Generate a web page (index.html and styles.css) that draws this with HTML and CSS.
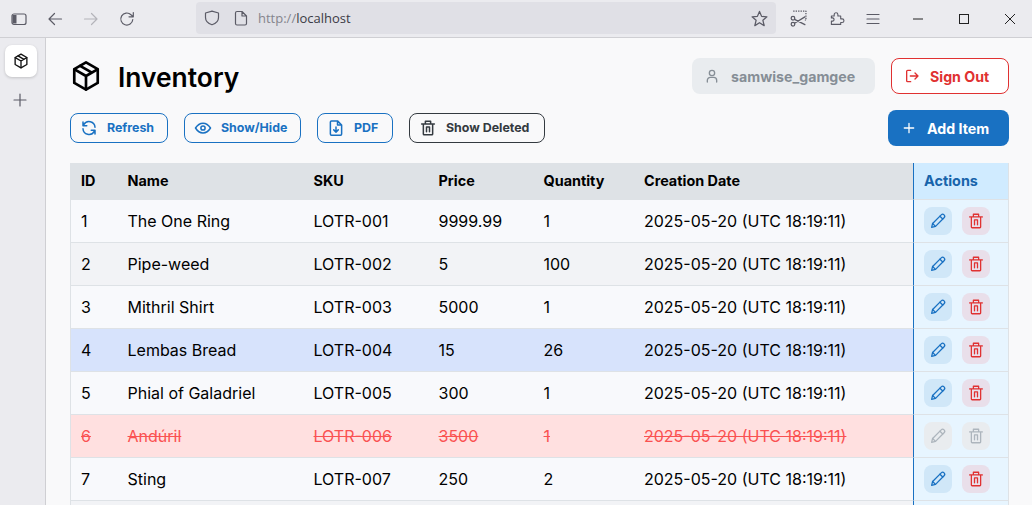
FILE: index.html
```html
<!DOCTYPE html>
<html lang="en">
<head>
<meta charset="utf-8">
<title>Inventory</title>
<link rel="stylesheet" href="styles.css">
</head>
<body>
<svg class="defs" width="0" height="0" aria-hidden="true">
  <defs>
    <symbol id="pkg" viewBox="0 0 24 24"><path d="M12 1.800 20.800 6.800v10.400L12 22.200 3.200 17.200V6.800Z"/><path d="M3.400 7 12 12l8.600-5M12 12v10M7.600 4.400l8.800 5.100"/></symbol>
    <symbol id="trash" viewBox="0 0 24 24"><path d="M3.500 6.500h17M8.500 6.500V3h7v3.500M5.800 6.500V20a1 1 0 0 0 1 1h10.400a1 1 0 0 0 1-1V6.500M10 17v-6.500h4V17"/></symbol>
    <symbol id="pencil" viewBox="0 0 24 24"><path d="M3.500 20.500 4.800 15.300 16.300 3.800a2.400 2.400 0 0 1 3.800 3.800L8.700 19.200Z"/><path d="M14.600 5.600 18.300 9.300M4.800 15.300l3.900 3.900"/></symbol>
  </defs>
</svg>
<header class="toolbar">
  <svg class="tb-icon sidebar-toggle" viewBox="0 0 16 16"><rect x="1" y="3" width="14" height="10.500" rx="2"/><path class="solid" d="M1.500 4h4v8.500h-4z"/></svg>
  <svg class="tb-icon back" viewBox="0 0 16 16"><path d="M14.500 8H2M7.500 2.500 2 8l5.500 5.500"/></svg>
  <svg class="tb-icon forward" viewBox="0 0 16 16"><path d="M1.500 8H14M8.500 2.500 14 8l-5.500 5.500"/></svg>
  <svg class="tb-icon reload" viewBox="0 0 16 16"><path d="M13.800 8.500A6 6 0 1 1 12 3.700L14 5.500M14.300 1.500v4.300h-4.300"/></svg>
  <div class="urlbar">
    <svg class="tb-icon shield" viewBox="0 0 16 16"><path d="M8 1.200 14.500 3v4.500c0 3.500-2.500 6-6.500 7.300C4 13.500 1.500 11 1.500 7.500V3Z"/></svg>
    <svg class="tb-icon page" viewBox="0 0 16 16"><path d="M2.500 3a1.500 1.500 0 0 1 1.500-1.500h5L13.500 6v7.500A1.500 1.500 0 0 1 12 15H4a1.500 1.500 0 0 1-1.500-1.500ZM9 1.500V6h4.500"/></svg>
    <span class="url"><span class="url-dim">http://</span>localhost</span>
    <svg class="tb-icon star" viewBox="0 0 16 16"><path d="M8 1.300 10 6l5 .4-3.800 3.300 1.200 5L8 12l-4.400 2.700 1.200-5L1 6.400 6 6Z"/></svg>
  </div>
  <svg class="tb-icon shot" viewBox="0 0 16 16"><path d="M3 1h12v8.500h-1" stroke-dasharray="1.300 1" stroke-linecap="butt"/><circle cx="2.800" cy="7.800" r="1.700"/><circle cx="2.800" cy="13.400" r="1.700"/><path d="M4.300 8.800 14 13.800M4.300 12.500 14 6.500"/></svg>
  <svg class="tb-icon ext" viewBox="0 0 16 16"><path d="M1.500 6.500h3V5a2 2 0 0 1 4 0v1.500h3v3H13a2 2 0 0 1 0 4h-1.500v2h-10v-3.500H3a1.800 1.800 0 0 0 0-3.500H1.500Z" transform="translate(1 -1) scale(.93)"/></svg>
  <svg class="tb-icon menu" viewBox="0 0 16 16"><path d="M2 3.500h12M2 8h12M2 12.500h12"/></svg>
  <div class="win-controls">
    <svg class="win-icon" viewBox="0 0 12 12"><path d="M1 6h10"/></svg>
    <svg class="win-icon" viewBox="0 0 12 12"><rect x="1.500" y="1.500" width="9" height="9"/></svg>
    <svg class="win-icon" viewBox="0 0 12 12"><path d="M1 1l10 10M11 1 1 11"/></svg>
  </div>
</header>
<div class="shell">
  <aside class="rail">
    <div class="rail-tab"><svg class="rail-pkg"><use href="#pkg"/></svg></div>
    <svg class="rail-add" viewBox="0 0 14 14"><path d="M7 1v12M1 7h12"/></svg>
  </aside>
  <main class="panel">
    <div class="title-row">
      <svg class="title-icon"><use href="#pkg"/></svg>
      <h1 class="title">Inventory</h1>
      <div class="user">
        <div class="user-pill">
          <svg class="btn-icon" viewBox="0 0 24 24"><circle cx="12" cy="7.500" r="4"/><path d="M5 21v-2.500a4.500 4.500 0 0 1 4.500-4.500h5a4.500 4.500 0 0 1 4.500 4.500V21"/></svg>
          <span>samwise_gamgee</span>
        </div>
        <button class="signout">
          <svg class="btn-icon" viewBox="0 0 24 24"><path d="M10 3.500H5.500a1.500 1.500 0 0 0-1.500 1.500v14a1.500 1.500 0 0 0 1.500 1.500H10M9.500 12H21M16.500 7.500 21 12l-4.500 4.500"/></svg>
          <span>Sign Out</span>
        </button>
      </div>
    </div>
    <div class="actions-row">
      <button class="btn btn-blue btn-refresh">
        <svg class="btn-icon" viewBox="0 0 24 24"><path d="M20 11A8 8 0 0 0 5 7.500L4 9M4 13a8 8 0 0 0 15 3.500l1-1.500M4 4v5h5M20 20v-5h-5"/></svg>
        <span>Refresh</span>
      </button>
      <button class="btn btn-blue btn-show">
        <svg class="btn-icon" viewBox="0 0 24 24"><circle cx="12" cy="12" r="2.800"/><path d="M2 12c2.800-4.500 6-6.500 10-6.500s7.200 2 10 6.500c-2.800 4.500-6 6.500-10 6.500S4.800 16.500 2 12Z"/></svg>
        <span>Show/Hide</span>
      </button>
      <button class="btn btn-blue btn-pdf">
        <svg class="btn-icon" viewBox="0 0 24 24"><path d="M4.500 4A1.500 1.500 0 0 1 6 2.500h8L19.500 8v12a1.500 1.500 0 0 1-1.500 1.500H6A1.500 1.500 0 0 1 4.500 20ZM14 2.500V8h5.500M12 10.500v7M9 14.500l3 3 3-3"/></svg>
        <span>PDF</span>
      </button>
      <button class="btn btn-dark btn-deleted">
        <svg class="btn-icon"><use href="#trash"/></svg>
        <span>Show Deleted</span>
      </button>
      <button class="add-item">
        <svg class="add-icon" viewBox="0 0 14 14"><path d="M7 1.500v11M1.500 7h11"/></svg>
        <span>Add Item</span>
      </button>
    </div>
    <table class="grid">
      <colgroup>
        <col class="c-id"><col class="c-name"><col class="c-sku"><col class="c-price"><col class="c-qty"><col class="c-date"><col class="c-act">
      </colgroup>
      <thead>
        <tr><th>ID</th><th>Name</th><th>SKU</th><th>Price</th><th>Quantity</th><th>Creation Date</th><th class="act-head">Actions</th></tr>
      </thead>
      <tbody>
        <tr class="odd"><td>1</td><td>The One Ring</td><td>LOTR-001</td><td>9999.99</td><td>1</td><td>2025-05-20 (UTC 18:19:11)</td><td class="act"><div class="act-btns"><button class="ib ib-edit"><svg><use href="#pencil"/></svg></button><button class="ib ib-del"><svg><use href="#trash"/></svg></button></div></td></tr>
        <tr class="even"><td>2</td><td>Pipe-weed</td><td>LOTR-002</td><td>5</td><td>100</td><td>2025-05-20 (UTC 18:19:11)</td><td class="act"><div class="act-btns"><button class="ib ib-edit"><svg><use href="#pencil"/></svg></button><button class="ib ib-del"><svg><use href="#trash"/></svg></button></div></td></tr>
        <tr class="odd"><td>3</td><td>Mithril Shirt</td><td>LOTR-003</td><td>5000</td><td>1</td><td>2025-05-20 (UTC 18:19:11)</td><td class="act"><div class="act-btns"><button class="ib ib-edit"><svg><use href="#pencil"/></svg></button><button class="ib ib-del"><svg><use href="#trash"/></svg></button></div></td></tr>
        <tr class="selected"><td>4</td><td>Lembas Bread</td><td>LOTR-004</td><td>15</td><td>26</td><td>2025-05-20 (UTC 18:19:11)</td><td class="act"><div class="act-btns"><button class="ib ib-edit"><svg><use href="#pencil"/></svg></button><button class="ib ib-del"><svg><use href="#trash"/></svg></button></div></td></tr>
        <tr class="odd"><td>5</td><td>Phial of Galadriel</td><td>LOTR-005</td><td>300</td><td>1</td><td>2025-05-20 (UTC 18:19:11)</td><td class="act"><div class="act-btns"><button class="ib ib-edit"><svg><use href="#pencil"/></svg></button><button class="ib ib-del"><svg><use href="#trash"/></svg></button></div></td></tr>
        <tr class="deleted"><td>6</td><td>Andúril</td><td>LOTR-006</td><td>3500</td><td>1</td><td>2025-05-20 (UTC 18:19:11)</td><td class="act"><div class="act-btns"><button class="ib ib-off"><svg><use href="#pencil"/></svg></button><button class="ib ib-off"><svg><use href="#trash"/></svg></button></div></td></tr>
        <tr class="odd"><td>7</td><td>Sting</td><td>LOTR-007</td><td>250</td><td>2</td><td>2025-05-20 (UTC 18:19:11)</td><td class="act"><div class="act-btns"><button class="ib ib-edit"><svg><use href="#pencil"/></svg></button><button class="ib ib-del"><svg><use href="#trash"/></svg></button></div></td></tr>
        <tr class="even"><td></td><td></td><td></td><td></td><td></td><td></td><td class="act"></td></tr>
      </tbody>
    </table>
  </main>
</div>
</body>
</html>
```
FILE: styles.css
```css
* { box-sizing: border-box; }
html, body { height: 100%; }
body {
  margin: 0;
  height: 505px;
  overflow: hidden;
  background: #ebebef;
  font-family: Inter, "Liberation Sans", sans-serif;
  color: #000;
  display: flex;
  flex-direction: column;
}
.defs { position: absolute; }
svg { fill: none; stroke: currentColor; stroke-linecap: round; stroke-linejoin: round; flex: none; }
button { font-family: inherit; cursor: pointer; }

/* browser toolbar */
.toolbar {
  height: 38px;
  flex: none;
  display: flex;
  align-items: center;
  padding: 0 16px 0 11px;
  background: #ebebef;
  border-bottom: 1px solid #cfcfd3;
  color: #5b5b66;
}
.tb-icon { width: 16px; height: 16px; stroke-width: 1.200; }
.solid { fill: currentColor; stroke: none; }
.back { margin-left: 20px; }
.forward { margin-left: 20px; color: #b4b4ba; }
.reload { margin-left: 20px; }
.urlbar {
  width: 580px;
  height: 32px;
  margin: -1px 0 0 61px;
  background: #e0e0e6;
  border-radius: 4px;
  display: flex;
  align-items: center;
  padding: 0 8px 0 8px;
}
.page { margin-left: 13px; }
.url { margin-left: 9px; font-family: "Open Sans", sans-serif; font-size: 13px; color: #3b3b45; flex: 1; }
.url-dim { color: #85858d; }
.star { width: 17px; height: 17px; }
.shot { margin-left: 14px; width: 17px; height: 17px; }
.ext { margin-left: 22px; }
.menu { margin-left: 20px; }
.win-controls { display: flex; margin-left: auto; gap: 34px; color: #222; }
.win-icon { width: 12px; height: 12px; stroke-width: 1; stroke-linecap: butt; stroke-linejoin: miter; }

/* shell */
.shell { flex: 1; display: flex; min-height: 0; }
.rail { width: 45px; flex: none; display: flex; flex-direction: column; align-items: flex-start; padding: 7px 0 0 5px; }
.rail-tab {
  width: 32px; height: 32px; background: #fff; border-radius: 7px;
  box-shadow: 0 1px 3px rgba(0,0,0,.18);
  display: flex; align-items: center; justify-content: center;
}
.rail-pkg { width: 16px; height: 16px; stroke-width: 2; color: #111; }
.rail-add { width: 14px; height: 14px; margin: 16px 0 0 8px; stroke-width: 1.200; color: #5b5b66; }
.panel {
  flex: 1;
  min-width: 0;
  background: #f9f9fa;
  border-left: 1px solid #cfcfd3;
  padding: 20px 23px 0 24px;
}

/* title */
.title-row { display: flex; align-items: center; height: 36px; }
.title-icon { width: 32px; height: 32px; stroke-width: 2; color: #000; margin-right: 16px; }
.title { margin: 1px 0 0; font-size: 26.4px; font-weight: 600; line-height: 34px; }
.user { margin-left: auto; display: flex; gap: 16px; }
.user-pill {
  width: 183px; height: 36px; background: #e9ecef; border-radius: 8px;
  display: flex; align-items: center; gap: 11px; padding-left: 12px;
  color: #868e96; font-size: 14.2px; font-weight: 700;
}
.btn-icon { width: 16px; height: 16px; stroke-width: 2; }
.signout {
  width: 118px; height: 36px; background: #fff; border: 1px solid #e03131; border-radius: 8px;
  display: flex; align-items: center; gap: 10px; padding: 0 0 0 12px;
  color: #e03131; font-size: 14.2px; font-weight: 700;
}

/* action row */
.actions-row { display: flex; align-items: center; height: 36px; margin-top: 16px; gap: 16px; }
.btn {
  height: 30px; background: transparent; border-radius: 8px; border: 1px solid;
  display: flex; align-items: center; padding: 0 0 0 9px; gap: 9px;
  font-size: 12.4px; font-weight: 700; margin-top: -1px;
}
.btn .btn-icon { width: 18px; height: 18px; }
.btn-blue { color: #1971c2; border-color: #1971c2; }
.btn-dark { color: #343a40; border-color: #343a40; }
.btn-refresh { width: 98px; }
.btn-show { width: 117px; }
.btn-pdf { width: 76px; }
.btn-deleted { width: 136px; }
.add-item {
  margin-left: auto; width: 121px; height: 36px; border: 0; border-radius: 8px;
  background: #1971c2; color: #fff; font-size: 14.2px; font-weight: 700;
  display: flex; align-items: center; gap: 12px; padding: 0 0 0 15px;
}
.add-icon { width: 12px; height: 12px; stroke-width: 1.500; }

/* table */
.grid {
  border-collapse: separate; border-spacing: 0; table-layout: fixed; width: 939px;
  margin-top: 17px; font-size: 16px;
}
.c-id { width: 47.500px; } .c-name { width: 186px; } .c-sku { width: 125px; } .c-price { width: 105px; }
.c-qty { width: 100.500px; } .c-date { width: 279px; } .c-act { width: 96px; }
th {
  height: 37px; background: #dee2e6; text-align: left; font-size: 14.4px; font-weight: 700;
  padding: 0 10px 1px; border-bottom: 1px solid #dee2e6;
}
th:first-child { padding-left: 11px; }
td { height: 43px; padding: 0 10px; border-bottom: 1px solid #dee2e6; white-space: nowrap; }
td:first-child { border-left: 1px solid #dee2e6; }
.odd td { background: #f8f9fc; }
.even td { background: #f2f3f6; }
.selected td { background: #d7e3fc; }
.deleted td { background: #ffe0e0; color: #fa5252; text-decoration: line-through; }
.act-head, td.act {
  border-left: 1px solid #1971c2; border-right: 1px solid #dee2e6; padding: 0 0 0 10px;
}
.act-head { background: #d0ebff; color: #1864ab; padding-bottom: 1px; }
tr td.act { background: #e7f5ff; text-decoration: none; }
.act-btns { display: flex; gap: 10px; }
.ib { width: 28px; height: 28px; border: 0; border-radius: 8px; padding: 0; display: flex; align-items: center; justify-content: center; }
.ib svg { width: 18px; height: 18px; stroke-width: 1.700; }
.ib-edit { background: #d0e7f8; color: #1971c2; }
.ib-del { background: #e9dfea; color: #e03131; }
.ib-off { background: #e9ecef; color: #adb5bd; }
```
